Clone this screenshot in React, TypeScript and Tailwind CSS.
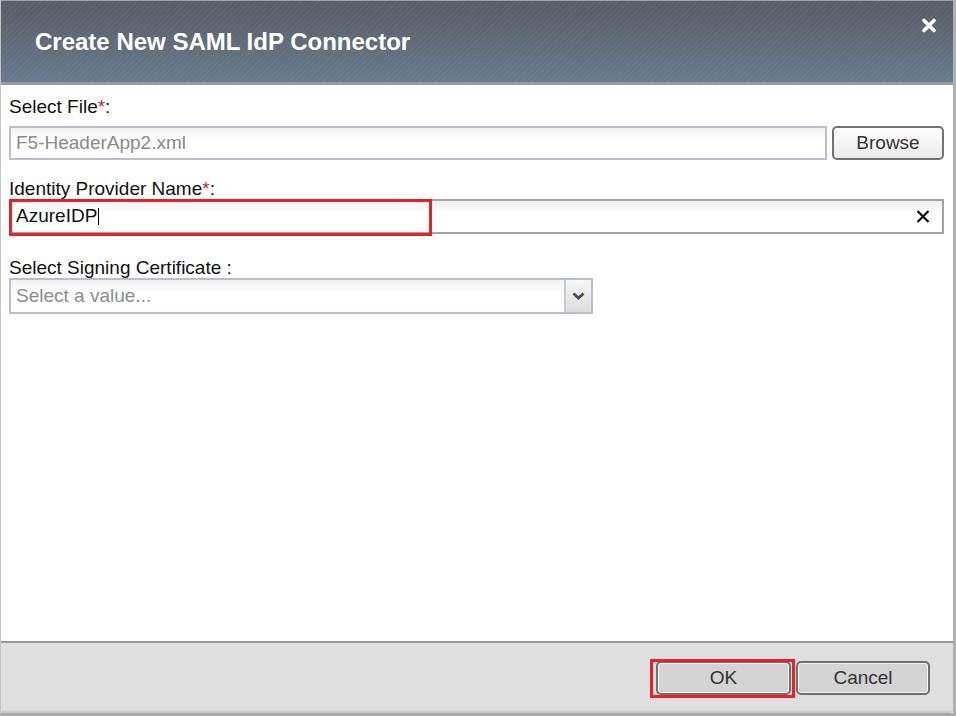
import React from "react";

const font = "font-['Liberation_Sans',Arial,sans-serif]";

const CloseIcon: React.FC = () => (
  <svg width="16" height="15" viewBox="0 0 16 15" aria-hidden="true">
    <path d="M3 2.5 L13 12.5 M13 2.5 L3 12.5" stroke="#fff" strokeWidth="3.6" strokeLinecap="round" />
  </svg>
);

const ClearIcon: React.FC = () => (
  <svg width="14" height="13" viewBox="0 0 14 13" aria-hidden="true">
    <path d="M1.5 1 L12.5 12 M12.5 1 L1.5 12" stroke="#111" strokeWidth="2.2" />
  </svg>
);

const Chevron: React.FC = () => (
  <svg width="13" height="8" viewBox="0 0 13 8" aria-hidden="true">
    <path d="M1.5 1.5 L6.5 6 L11.5 1.5" fill="none" stroke="#4a4a4a" strokeWidth="2.8" />
  </svg>
);

const Label: React.FC<{ text: string; required?: boolean; suffix?: string }> = ({ text, required, suffix = ":" }) => (
  <div className="text-[19px] leading-[19px] text-[#111]">
    {text}
    {required && <span className="text-[#c0272d]">*</span>}
    {suffix}
  </div>
);

const FooterButton: React.FC<{ children: React.ReactNode; highlight?: boolean; width: string }> = ({ children, highlight, width }) => (
  <div className="relative">
    <button
      className={`${width} h-[34px] rounded-[5px] border-2 border-[#6f6f6f] bg-[#d4d4d4] shadow-[inset_0_0_0_1px_#f4f4f4] text-[19px] text-[#333]`}
    >
      {children}
    </button>
    {highlight && (
      <div className="absolute -left-[6px] -top-[2px] -right-[4px] -bottom-[3px] border-[3px] border-[#e8202a] pointer-events-none" />
    )}
  </div>
);

export default function App() {
  return (
    <div className={`${font} w-[956px] h-[716px] flex flex-col bg-white border-l border-l-[#c4c4c4] border-r-[3px] border-r-[#b0b0b0] border-b-[3px] border-b-[#a9a9a9]`}>
      {/* title bar */}
      <div className="h-[85px] shrink-0 flex items-center justify-between pl-[34px] pr-[16px] border-t border-t-[#9ea3a9] border-b-[3px] border-b-[#9a9a9a] bg-[repeating-linear-gradient(135deg,rgba(255,255,255,0.035)_0px,rgba(255,255,255,0.035)_1px,transparent_1px,transparent_4px),linear-gradient(180deg,#585d65,#5e6873_40%,#687b8e)]">
        <h1 className="text-[24px] leading-[24px] font-bold text-white">Create New SAML IdP Connector</h1>
        <div className="self-start mt-[17px]">
          <CloseIcon />
        </div>
      </div>

      {/* form */}
      <div className="flex-1 pt-[12px] pl-[8px] pr-[9px]">
        <Label text="Select File" required />
        <div className="mt-[10px] flex gap-[5px]">
          <div className="flex-1 h-[34px] flex items-center pl-[5px] border-2 border-[#b9bdcf] bg-[linear-gradient(180deg,#f1f1f1,#ffffff_40%)] text-[19px] text-[#8a8a8a]">
            F5-HeaderApp2.xml
          </div>
          <button className="w-[112px] h-[34px] rounded-[5px] border-2 border-[#737373] bg-[linear-gradient(180deg,#ffffff,#eaeaea)] text-[19px] text-[#333]">
            Browse
          </button>
        </div>

        <div className="mt-[19px]">
          <Label text="Identity Provider Name" required />
        </div>
        <div className="relative mt-[1px] h-[35px] flex items-center justify-between pl-[5px] pr-[12px] border-2 border-[#a3a3a3] bg-[linear-gradient(180deg,#f0f0f0,#ffffff_40%)]">
          <div className="flex items-center text-[19px] text-[#111]">
            AzureIDP
            <span className="ml-[1px] w-px h-[17px] bg-black" />
          </div>
          <ClearIcon />
          <div className="absolute -left-[2px] -top-[2px] w-[423px] h-[37px] border-[3px] border-[#e8202a] pointer-events-none" />
        </div>

        <div className="mt-[24px]">
          <Label text="Select Signing Certificate" suffix=" :" />
        </div>
        <div className="mt-[1px] w-[584px] h-[36px] flex border-2 border-[#b9bdcf] bg-[linear-gradient(180deg,#f1f1f1,#ffffff_40%)]">
          <div className="flex-1 flex items-center pl-[5px] text-[19px] text-[#8c8c8c]">Select a value...</div>
          <div className="w-[27px] flex items-center justify-center border-l-2 border-l-[#c4c7d4] bg-[linear-gradient(180deg,#f7f7f7,#dcdcdc)]">
            <Chevron />
          </div>
        </div>
      </div>

      {/* footer */}
      <div className="h-[72px] shrink-0 flex justify-end items-start gap-[5px] pt-[18px] pr-[23px] border-t-2 border-t-[#999] border-b-2 border-b-[#cacaca] bg-[#dfdfdf] rounded-br-[3px]">
        <FooterButton highlight width="w-[135px]">OK</FooterButton>
        <FooterButton width="w-[134px]">Cancel</FooterButton>
      </div>
    </div>
  );
}
